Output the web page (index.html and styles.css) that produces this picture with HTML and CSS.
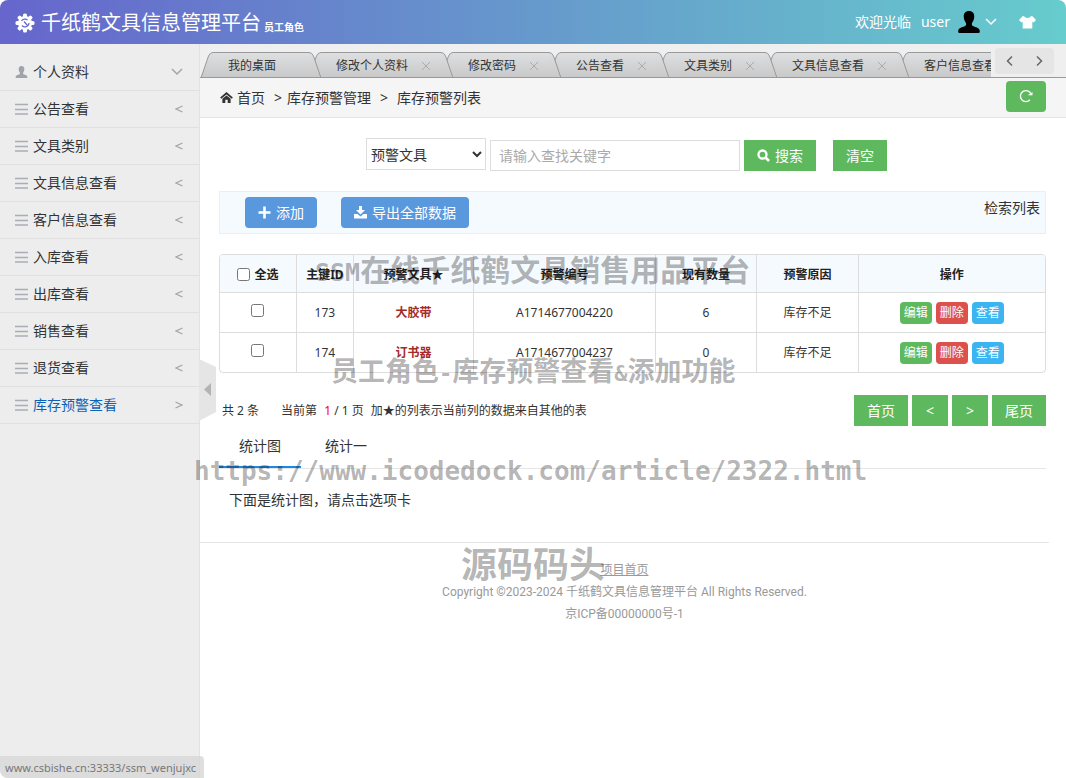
FILE: index.html
```html
<!DOCTYPE html>
<html lang="zh-CN">
<head>
<meta charset="utf-8">
<title>千纸鹤文具信息管理平台</title>
<link rel="stylesheet" href="styles.css">
</head>
<body>
<svg class="defs" width="0" height="0" aria-hidden="true">
  <symbol id="user" viewBox="0 0 24 24"><path d="M12 0c4 0 6 2.700 5.700 6.500-.2 3-1.300 5-2.400 6.500-.6 2 .1 3.200 2.200 4 3.500 1.200 6.300 2 6.300 5.300 0 1-.5 1.700-1.500 1.700H1.700C.7 24 .2 23.300.2 22.300c0-3.300 2.800-4.100 6.300-5.300 2.100-.8 2.800-2 2.200-4C7.600 11.500 6.500 9.500 6.300 6.500 6 2.700 8 0 12 0z"/></symbol>
  <symbol id="bars" viewBox="0 0 13 12"><path d="M0 1.500h13M0 6.500h13M0 11h13" stroke="currentColor" stroke-width="1.500" fill="none"/></symbol>
  <symbol id="left" viewBox="0 0 8 8"><path d="M7.500 1L1 4l6.500 3" stroke="currentColor" stroke-width="1.300" fill="none"/></symbol>
  <symbol id="right" viewBox="0 0 8 8"><path d="M.5 1L7 4 .5 7" stroke="currentColor" stroke-width="1.300" fill="none"/></symbol>
  <symbol id="down" viewBox="0 0 12 8"><path d="M1 1l5 5 5-5" stroke="currentColor" stroke-width="1.500" fill="none"/></symbol>
  <symbol id="close" viewBox="0 0 8 8"><path d="M0 0l8 8M8 0L0 8" stroke="currentColor" fill="none"/></symbol>
  <symbol id="cap-l" viewBox="0 0 12 25"><path d="M0 25L7.500 4Q9 .5 12 .5V25z" fill="url(#tabfill)"/><path d="M.3 25L7.500 4Q9 .5 12 .5" fill="none" stroke="#999"/></symbol>
  <symbol id="cap-r" viewBox="0 0 12 25"><path d="M12 25L4.500 4Q3 .5 0 .5V25z" fill="url(#tabfill)"/><path d="M11.700 25L4.500 4Q3 .5 0 .5" fill="none" stroke="#999"/></symbol>
  <linearGradient id="tabfill" gradientUnits="userSpaceOnUse" x1="0" y1="0" x2="0" y2="25"><stop offset="0" stop-color="#dedfe0"/><stop offset="1" stop-color="#c9c9ca"/></linearGradient>
</svg>

<header class="top">
  <h1 class="brand">
    <svg class="gear" viewBox="-10 -10 20 20"><g fill="#fff"><rect x="-2" y="-9.500" width="4" height="19" rx="1.500"/><rect x="-2" y="-9.500" width="4" height="19" rx="1.500" transform="rotate(45)"/><rect x="-2" y="-9.500" width="4" height="19" rx="1.500" transform="rotate(90)"/><rect x="-2" y="-9.500" width="4" height="19" rx="1.500" transform="rotate(135)"/><circle r="7"/></g><path d="M-3.500-2A4 4 0 0 1 2.500-3M4 0A4 4 0 0 1-3 2.500M-1-1.500l3.500 4" fill="none" stroke="#6769cb" stroke-width="1.200"/></svg>
    <span>千纸鹤文具信息管理平台</span><small>员工角色</small>
  </h1>
  <div class="account">
    <span>欢迎光临</span><span class="name">user</span>
    <svg class="avatar"><use href="#user"/></svg>
    <svg class="caret"><use href="#down"/></svg>
    <svg class="shirt" viewBox="0 0 17 13"><path d="M5 0C6 2.500 11 2.500 12 0l1.500.3L17 4l-2.300 2.500-1.400-.8V12.500H3.700V5.700l-1.400.8L0 4 3.500.3z" fill="#fff"/></svg>
  </div>
</header>

<div class="layout">
  <aside class="side">
    <nav class="menu">
      <a href="#"><svg class="mi"><use href="#user"/></svg>个人资料<svg class="arr wide"><use href="#down"/></svg></a>
      <a href="#"><svg class="mi"><use href="#bars"/></svg>公告查看<svg class="arr"><use href="#left"/></svg></a>
      <a href="#"><svg class="mi"><use href="#bars"/></svg>文具类别<svg class="arr"><use href="#left"/></svg></a>
      <a href="#"><svg class="mi"><use href="#bars"/></svg>文具信息查看<svg class="arr"><use href="#left"/></svg></a>
      <a href="#"><svg class="mi"><use href="#bars"/></svg>客户信息查看<svg class="arr"><use href="#left"/></svg></a>
      <a href="#"><svg class="mi"><use href="#bars"/></svg>入库查看<svg class="arr"><use href="#left"/></svg></a>
      <a href="#"><svg class="mi"><use href="#bars"/></svg>出库查看<svg class="arr"><use href="#left"/></svg></a>
      <a href="#"><svg class="mi"><use href="#bars"/></svg>销售查看<svg class="arr"><use href="#left"/></svg></a>
      <a href="#"><svg class="mi"><use href="#bars"/></svg>退货查看<svg class="arr"><use href="#left"/></svg></a>
      <a href="#" class="current"><svg class="mi"><use href="#bars"/></svg>库存预警查看<svg class="arr"><use href="#right"/></svg></a>
    </nav>
    <button class="fold" aria-label="收起菜单"><svg viewBox="0 0 17 62"><path d="M0 0l17 8v45L0 62z" fill="#e5e5e5"/><path d="M12 24v13l-7-6.500z" fill="#b3b3b3"/></svg></button>
  </aside>

  <main class="main">
    <div class="tabbar">
      <ul class="tabs">
        <li><svg class="cap"><use href="#cap-l"/></svg><span class="tab">我的桌面</span><svg class="cap"><use href="#cap-r"/></svg></li>
        <li><svg class="cap"><use href="#cap-l"/></svg><span class="tab">修改个人资料<svg class="x"><use href="#close"/></svg></span><svg class="cap"><use href="#cap-r"/></svg></li>
        <li><svg class="cap"><use href="#cap-l"/></svg><span class="tab">修改密码<svg class="x"><use href="#close"/></svg></span><svg class="cap"><use href="#cap-r"/></svg></li>
        <li><svg class="cap"><use href="#cap-l"/></svg><span class="tab">公告查看<svg class="x"><use href="#close"/></svg></span><svg class="cap"><use href="#cap-r"/></svg></li>
        <li><svg class="cap"><use href="#cap-l"/></svg><span class="tab">文具类别<svg class="x"><use href="#close"/></svg></span><svg class="cap"><use href="#cap-r"/></svg></li>
        <li><svg class="cap"><use href="#cap-l"/></svg><span class="tab">文具信息查看<svg class="x"><use href="#close"/></svg></span><svg class="cap"><use href="#cap-r"/></svg></li>
        <li><svg class="cap"><use href="#cap-l"/></svg><span class="tab">客户信息查看<svg class="x"><use href="#close"/></svg></span><svg class="cap"><use href="#cap-r"/></svg></li>
      </ul>
      <div class="scroll">
        <button aria-label="向左"><svg viewBox="0 0 8 12"><path d="M6 1.500L1.500 6 6 10.500" fill="none" stroke="#666" stroke-width="1.500"/></svg></button>
        <button aria-label="向右"><svg viewBox="0 0 8 12"><path d="M2 1.500L6.500 6 2 10.500" fill="none" stroke="#666" stroke-width="1.500"/></svg></button>
      </div>
    </div>

    <div class="crumbs">
      <svg class="home" viewBox="0 0 14 12"><path d="M.7 6.700L7 1.300l6.300 5.400" fill="none" stroke="#333" stroke-width="2"/><path d="M2.500 7.300L7 3.700l4.500 3.600V12H8.300V8.500H5.700V12H2.500z" fill="#333"/></svg>
      <a href="#">首页</a><span class="sep">&gt;</span><span>库存预警管理</span><span class="sep wide">&gt;</span><span>库存预警列表</span>
      <button class="refresh" aria-label="刷新"><svg viewBox="0 0 14 14"><path d="M11 10.800A5.500 5.500 0 1 1 12 5" fill="none" stroke="#fff" stroke-width="1.300"/><path d="M8.800 6.300h4.700V3z" fill="#fff"/></svg></button>
    </div>

    <div class="content">
      <form class="search">
        <select aria-label="查找字段"><option>预警文具</option></select>
        <input type="text" placeholder="请输入查找关键字" aria-label="关键字">
        <button type="button" class="btn green"><svg viewBox="0 0 13 13"><circle cx="5.500" cy="5.500" r="4" fill="none" stroke="#fff" stroke-width="2.300"/><path d="M8.500 8.500L12 12" stroke="#fff" stroke-width="2.600"/></svg>搜索</button>
        <button type="button" class="btn green clear">清空</button>
      </form>

      <div class="toolbar">
        <button class="btn blue"><svg viewBox="0 0 13 13"><path d="M6.500.5v12M.5 6.500h12" stroke="#fff" stroke-width="2.600"/></svg>添加</button>
        <button class="btn blue"><svg viewBox="0 0 13 13"><path d="M5 0h3v4h3L6.500 8.500 2 4h3z" fill="#fff"/><path d="M0 8h3.500l3 2.500 3-2.500H13v4.500H0z" fill="#fff"/></svg>导出全部数据</button>
        <span class="caption">检索列表</span>
      </div>

      <div class="frame">
      <table class="grid">
        <colgroup><col class="c1"><col class="c2"><col class="c3"><col class="c4"><col class="c5"><col class="c6"><col class="c7"></colgroup>
        <thead><tr><th><label><input type="checkbox">全选</label></th><th>主键ID</th><th>预警文具★</th><th>预警编号</th><th>现有数量</th><th>预警原因</th><th>操作</th></tr></thead>
        <tbody>
          <tr><td><input type="checkbox" aria-label="选择173"></td><td>173</td><td class="item">大胶带</td><td>A1714677004220</td><td>6</td><td>库存不足</td><td><div class="ops"><button class="op edit">编辑</button><button class="op del">删除</button><button class="op view">查看</button></div></td></tr>
          <tr><td><input type="checkbox" aria-label="选择174"></td><td>174</td><td class="item">订书器</td><td>A1714677004237</td><td>0</td><td>库存不足</td><td><div class="ops"><button class="op edit">编辑</button><button class="op del">删除</button><button class="op view">查看</button></div></td></tr>
        </tbody>
      </table>
      </div>

      <div class="pager">
        <span class="total">共 2 条</span><span class="page">当前第 <em>1</em> / 1 页</span><span class="note">加★的列表示当前列的数据来自其他的表</span>
        <div class="pages"><button class="btn green">首页</button><button class="btn green">&lt;</button><button class="btn green">&gt;</button><button class="btn green">尾页</button></div>
      </div>

      <div class="charts"><button class="on">统计图</button><button>统计一</button></div>
      <p class="hint">下面是统计图，请点击选项卡</p>
    </div>

    <footer class="foot">
      <a href="#">项目首页</a>
      <p>Copyright ©2023-2024 千纸鹤文具信息管理平台 All Rights Reserved.</p>
      <p>京ICP备00000000号-1</p>
    </footer>
  </main>
</div>

<div class="mark m1"><span>SSM</span>在线千纸鹤文具销售用品平台</div>
<div class="mark m2">员工角色<span>-</span>库存预警查看<span>&amp;</span>添加功能</div>
<div class="mark m3">https://www.icodedock.com/article/2322.html</div>
<div class="mark m4">源码码头</div>
<div class="status">www.csbishe.cn:33333/ssm_wenjujxc</div>
</body>
</html>
```
FILE: styles.css
```css
* { box-sizing: border-box; }
body {
  margin: 0;
  min-height: 100vh;
  display: flex;
  flex-direction: column;
  background: #fff;
  color: #333;
  font: 14px/20px "Noto Sans", "Noto Sans CJK SC", sans-serif;
}
button, input, select { font: inherit; color: inherit; margin: 0; }
button { border: 0; padding: 0; background: none; cursor: pointer; }
a { color: inherit; text-decoration: none; }
svg { display: block; flex: none; }
p, h1, ul { margin: 0; padding: 0; }
.defs { position: absolute; }

.top {
  height: 44px;
  padding: 0 30px 0 15px;
  display: flex;
  align-items: center;
  justify-content: space-between;
  color: #fff;
  background: linear-gradient(90deg, #6666cc, #66cccc);
  border-radius: 8px 8px 0 0;
}
.brand { display: flex; align-items: center; padding-top: 2px; font-size: 20px; font-weight: 400; line-height: 28px; }
.gear { width: 20px; height: 20px; margin-right: 6px; }
.brand small { align-self: flex-end; margin-left: 3px; font-size: 10px; font-weight: 700; line-height: 20px; }
.account { display: flex; align-items: center; }
.name { margin-left: 10px; }
.avatar { width: 22px; height: 24px; margin-left: 8px; fill: #000; }
.caret { width: 12px; height: 8px; margin: 0 22px 0 5px; }
.shirt { width: 17px; height: 13px; }

.layout { flex: 1; display: flex; }
.side {
  position: relative;
  flex: none;
  width: 200px;
  padding-top: 10px;
  background: #ededed;
  border-right: 1px solid #e2e2e2;
  border-bottom-left-radius: 8px;
}
.menu a {
  display: flex;
  align-items: center;
  height: 37px;
  padding: 0 16px 0 15px;
  border-bottom: 1px solid #e0e0e0;
}
.menu .current { color: #0c62b8; }
.mi { width: 13px; height: 12px; margin-right: 5px; fill: #a0a4aa; color: #a9adb5; }
.arr { width: 8px; height: 8px; margin-left: auto; color: #a5a5a5; }
.arr.wide { width: 12px; }
.fold { position: absolute; left: 199px; top: 315px; width: 17px; height: 62px; }

.main { flex: 1; min-width: 0; }
.tabbar {
  display: flex;
  height: 34px;
  padding-right: 12px;
  background: #efeff0;
  border-bottom: 1px solid #999;
}
.tabs {
  flex: 1;
  min-width: 0;
  display: flex;
  align-items: flex-end;
  overflow: hidden;
  list-style: none;
  padding-left: 1px;
  margin-right: 4px;
}
.tabs li { display: flex; flex: none; margin-right: -12px; position: relative; }
.tabs li:nth-child(1) { z-index: 7; }
.tabs li:nth-child(2) { z-index: 6; }
.tabs li:nth-child(3) { z-index: 5; }
.tabs li:nth-child(4) { z-index: 4; }
.tabs li:nth-child(5) { z-index: 3; }
.tabs li:nth-child(6) { z-index: 2; }
.cap { width: 12px; height: 25px; }
.tab {
  display: flex;
  align-items: center;
  height: 25px;
  padding: 1px 33px 0 15px;
  font-size: 12px;
  white-space: nowrap;
  border-top: 1px solid #999;
  background: linear-gradient(#dedfe0, #c9c9ca);
}
.tab .x { width: 8px; height: 8px; margin: 0 -22px 0 14px; color: #aaa; }
.scroll { flex: none; display: flex; width: 59px; height: 26px; margin-top: 4px; background: #e5e5e5; border-radius: 4px; }
.scroll button { flex: 1; display: grid; place-items: center; }
.scroll svg { width: 8px; height: 12px; }

.crumbs {
  display: flex;
  align-items: center;
  height: 40px;
  padding: 0 20px;
  background: #f5f5f5;
  border-bottom: 1px solid #e5e5e5;
}
.home { width: 13px; height: 11px; margin-right: 4px; }
.sep { margin: 0 5px 0 9px; }
.sep.wide { margin-right: 9px; }
.refresh { width: 40px; height: 31px; margin: 0 0 3px auto; display: grid; place-items: center; background: #5eb95e; border-radius: 4px; }
.refresh svg { width: 14px; height: 14px; }

.content { padding: 20px 20px 0 19px; }
.search { display: flex; justify-content: center; align-items: flex-end; padding-right: 12px; gap: 4px; }
.search select { width: 120px; height: 32px; margin-bottom: 1px; padding: 0; background: #fff; border: 1px solid #ddd; border-radius: 0; }
.search input { width: 250px; height: 31px; padding: 0 8px; border: 1px solid #ddd; }
.search input::placeholder { color: #aaa; }
.btn { display: flex; align-items: center; justify-content: center; height: 31px; padding: 0 13px; color: #fff; }
.btn svg { width: 13px; height: 13px; margin-right: 5px; }
.green { background: #5eb95e; }
.search .clear { margin-left: 13px; }
.blue { background: #5a98de; border-radius: 4px; }

.toolbar {
  display: flex;
  align-items: center;
  gap: 24px;
  height: 43px;
  margin-top: 20px;
  padding: 0 5px 0 25px;
  background: #f5fafe;
  border: 1px solid #ebeff2;
}
.caption { margin: 0 0 10px auto; }

.frame { margin-top: 20px; border: 1px solid #ddd; border-radius: 4px; overflow: hidden; }
.grid { width: 100%; table-layout: fixed; border-spacing: 0; font-size: 12px; text-align: center; }
.grid th, .grid td { padding: 0; border-left: 1px solid #ddd; }
.grid tr > :first-child { border-left: 0; }
.grid th { height: 37px; padding-top: 2px; background: #f5fafe; font-weight: 700; color: #222; }
.grid td { height: 40px; border-top: 1px solid #ddd; }
.grid label { display: flex; align-items: center; justify-content: center; gap: 4px; }
.grid input { width: 13px; height: 13px; }
.grid .item { color: #a52a2a; font-weight: 700; }
.c1 { width: 9.2%; }
.c2 { width: 6.9%; }
.c3 { width: 14.6%; }
.c4 { width: 22%; }
.c5 { width: 12.3%; }
.c6 { width: 12.3%; }
.ops { display: flex; justify-content: center; gap: 4px; }
.op { width: 32px; height: 22px; color: #fff; border-radius: 4px; }
.edit { background: #5eb95e; }
.del { background: #dd514c; }
.view { background: #3bb4f2; }

.pager { display: flex; align-items: center; margin-top: 22px; padding-left: 3px; font-size: 12px; }
.page { margin: 0 7px 0 22px; }
.page em { margin: 0 0 0 4px; color: #f00; font-style: normal; }
.pages { display: flex; gap: 4px; margin-left: auto; font-size: 14px; }
.pages .btn { min-width: 36px; }

.charts { display: flex; margin-top: 1px; border-bottom: 1px solid #e6e6e6; }
.charts button { height: 41px; padding: 0 20px 2px; border-bottom: 2px solid transparent; }
.charts .on { border-color: #1e88e5; }
.charts button + button { margin-left: 4px; }
.hint { padding: 21px 10px 32px; }

.foot {
  margin-right: 17px;
  padding-top: 16px;
  border-top: 1px solid #e5e5e5;
  color: #999;
  font-family: Roboto, "Noto Sans CJK SC", sans-serif;
  font-size: 12px;
  line-height: 22px;
  text-align: center;
}
.foot a { text-decoration: underline; }

.mark {
  position: absolute;
  z-index: 20;
  color: rgba(0, 0, 0, .3);
  font-family: "Noto Sans CJK SC", sans-serif;
  font-weight: 700;
  line-height: 40px;
  white-space: nowrap;
  pointer-events: none;
}
.mark span, .m3 { font-family: "DejaVu Sans Mono", monospace; }
.m1 { left: 315px; top: 248px; font-size: 30px; }
.m1 span { font-size: 25px; }
.m2 { left: 331px; top: 350px; font-size: 27px; }
.m2 span { font-size: 22px; }
.m3 { left: 194px; top: 451px; font-size: 26px; }
.m4 { left: 461px; top: 542px; font-size: 36px; }
.status {
  position: absolute;
  z-index: 21;
  left: 0;
  bottom: 0;
  height: 22px;
  padding: 0 8px 0 5px;
  background: rgba(215, 215, 215, .8);
  color: #777;
  font-size: 11px;
  line-height: 23px;
  border-radius: 0 4px 0 8px;
}
```
